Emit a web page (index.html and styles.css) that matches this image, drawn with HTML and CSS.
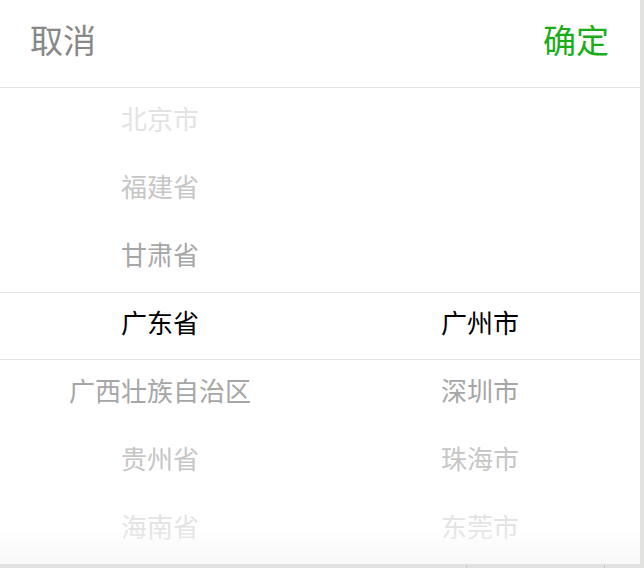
FILE: index.html
```html
<!DOCTYPE html>
<html lang="zh-CN">
<head>
<meta charset="utf-8">
<title>Picker</title>
<link rel="stylesheet" href="styles.css">
</head>
<body>
<div class="sheet">
  <div class="header">
    <span class="cancel">取消</span>
    <span class="confirm">确定</span>
  </div>
  <div class="picker">
    <div class="col">
      <div class="item far">北京市</div>
      <div class="item mid">福建省</div>
      <div class="item near">甘肃省</div>
      <div class="item sel">广东省</div>
      <div class="item near">广西壮族自治区</div>
      <div class="item mid">贵州省</div>
      <div class="item far">海南省</div>
    </div>
    <div class="col">
      <div class="item"></div>
      <div class="item"></div>
      <div class="item"></div>
      <div class="item sel">广州市</div>
      <div class="item near">深圳市</div>
      <div class="item mid">珠海市</div>
      <div class="item far">东莞市</div>
    </div>
    <div class="indicator"></div>
    <div class="fade"></div>
  </div>
</div>
<div class="base">
  <span class="tick t1"></span>
  <span class="tick t2"></span>
</div>
</body>
</html>
```

FILE: styles.css
```css
html, body {
  margin: 0;
  padding: 0;
}
body {
  width: 644px;
  height: 568px;
  background: #e2e2e0;
  font-family: "Noto Sans CJK SC", "Noto Sans", sans-serif;
  overflow: hidden;
}
.sheet {
  width: 640px;
  height: 564px;
  background: #ffffff;
}
.header {
  height: 79px;
  padding: 0 31px 8px 30px;
  border-bottom: 1px solid #e3e3e3;
  display: flex;
  align-items: center;
  justify-content: space-between;
  font-size: 33px;
  line-height: 1;
}
.cancel {
  color: #888888;
}
.confirm {
  color: #1aad19;
}
.picker {
  position: relative;
  height: 476px;
  display: grid;
  grid-template-columns: 1fr 1fr;
}
.col {
  display: flex;
  flex-direction: column;
}
.item {
  height: 60px;
  line-height: 60px;
  padding-bottom: 8px;
  text-align: center;
  font-size: 26px;
  color: #000;
  white-space: nowrap;
}
.item.near { color: #a6a6a6; }
.item.mid { color: #c6c6c6; }
.item.far { color: #e3e3e3; }
.item.sel { color: #000000; }
.indicator {
  position: absolute;
  left: 0;
  right: 0;
  top: 204px;
  height: 66px;
  border-top: 1px solid #e3e3e3;
  border-bottom: 1px solid #e3e3e3;
  pointer-events: none;
}
.fade {
  position: absolute;
  left: 0;
  right: 0;
  bottom: 0;
  height: 36px;
  background: linear-gradient(to bottom, rgba(248,248,248,0), rgba(248,248,248,1));
  pointer-events: none;
}
.base {
  position: relative;
  height: 4px;
}
.tick {
  position: absolute;
  top: 1px;
  width: 1px;
  height: 3px;
  background: #c8c8c6;
}
.t1 { left: 466px; }
.t2 { left: 604px; }
```
